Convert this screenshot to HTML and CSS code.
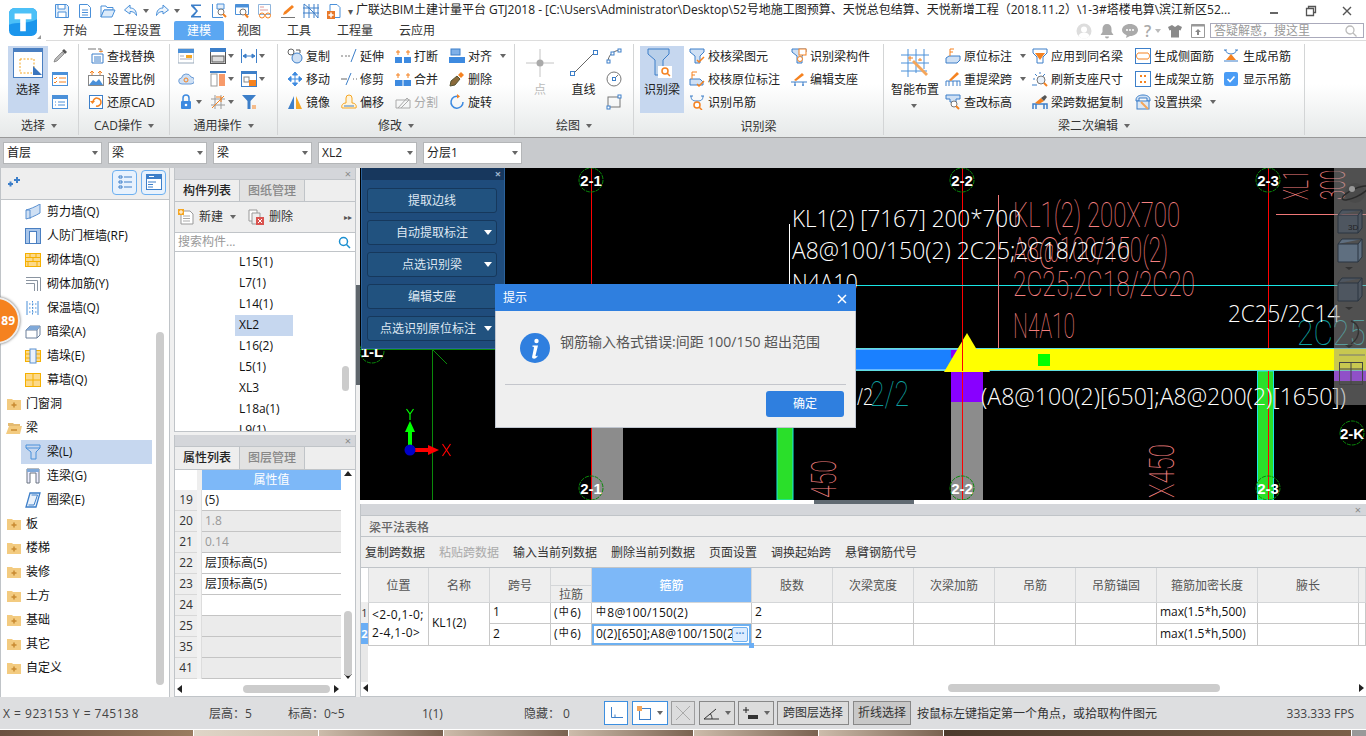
FILE: index.html
```html
<!DOCTYPE html>
<html lang="zh">
<head>
<meta charset="utf-8">
<title>广联达BIM土建计量平台 GTJ2018</title>
<link rel="stylesheet" href="styles.css">
</head>
<body>
<div class="app">

<header class="top">
  <div class="logo">
    <svg width="28" height="28" viewBox="0 0 30 30"><rect width="30" height="30" rx="6" fill="#1b96ec"/><path d="M0 6a6 6 0 0 1 6-6h18a6 6 0 0 1 6 6v6C18 18 8 14 0 18z" fill="#4cc0f7"/><path d="M6 6h18v6h-6v13h-6V12H6z" fill="#fff"/></svg>
    <i class="lgmark"></i>
  </div>
  <div class="top-right">
    <div class="titlerow">
      <div class="qa">
        <span class="qs"><svg class="i" viewBox="0 0 16 16"><path d="M1.500 1.500h11l2 2v11h-13z" fill="#e4effb" stroke="#4a90d9"/><path d="M4 2v4h7V2M4 14V9h8v5" fill="#fff" stroke="#4a90d9"/></svg></span>
        <span class="qs"><svg class="i" viewBox="0 0 16 16"><path d="M2.500 1.500h8l3 3v10h-11z" fill="#fff" stroke="#4a90d9"/><path d="M5 7h6M5 9.500h6M5 12h6" stroke="#4a90d9"/></svg></span>
        <span class="qs"><svg class="i" viewBox="0 0 16 16"><path d="M1 3h5l1 1.500h6V7H4L1 14z" fill="#fff" stroke="#4a90d9"/><path d="M4 7h11l-3 7H1z" fill="#dcebfa" stroke="#4a90d9"/></svg></span>
        <span class="qs"><svg class="i" viewBox="0 0 16 16"><path d="M7 2 1.500 7 7 11V8.500c3 0 5 1 6.500 4 0-5-2.500-7.500-6.500-7.500z" fill="#eef5fc" stroke="#4a90d9"/></svg></span>
        <span class="qc"><i class="c"></i></span>
        <span class="qs"><svg class="i" viewBox="0 0 16 16"><path d="M9 2l5.500 5L9 11V8.500c-3 0-5 1-6.500 4 0-5 2.500-7.500 6.500-7.500z" fill="#eef5fc" stroke="#4a90d9"/></svg></span>
        <span class="qc"><i class="c"></i></span>
        <span class="qs ql"><svg class="i" viewBox="0 0 16 16"><path d="M13 3V1.500H3V3l5 5-5 5v1.500h10V13H6l4-5-4-5z" fill="#3d7fc9"/></svg></span>
        <span class="qs"><svg class="i" viewBox="0 0 16 16"><path d="M1.500 1v13.500H12" fill="none" stroke="#4a90d9"/><path d="M6 1h7v5H6z" fill="#e4effb" stroke="#4a90d9"/><circle cx="10" cy="9" r="3" fill="#fff" stroke="#777"/><path d="M12 11l3 3" stroke="#f58220" stroke-width="2"/></svg></span>
        <span class="qs"><svg class="i" viewBox="0 0 16 16"><path d="M1.500 1.500h13v10h-13z" fill="#fff" stroke="#4a90d9"/><path d="M1.500 1.500h13v3h-13z" fill="#4a90d9"/><circle cx="9" cy="9" r="3" fill="#fff" stroke="#777"/><path d="M11 11l3 3.500" stroke="#f58220" stroke-width="2"/></svg></span>
        <span class="qs"><svg class="i" viewBox="0 0 16 16"><path d="M1.500 1.500h12v10h-12z" fill="#fff" stroke="#8fb5dc"/><path d="M3 4h4M3 7h8" stroke="#d99"/><circle cx="5" cy="12.500" r="2.500" fill="none" stroke="#f58220"/><circle cx="11" cy="12.500" r="2.500" fill="none" stroke="#f58220"/></svg></span>
        <span class="qs"><svg class="i" viewBox="0 0 16 16"><path d="M1 14.500h14" stroke="#777"/><path d="M3 12l1-3 8-7 2 2-8 7z" fill="#f58220"/></svg></span>
        <span class="qs"><svg class="i" viewBox="0 0 16 16"><path d="M1 1v14M6 1v14M11 1v14M15 1v14M0 5h16M0 10h16M1 1l5 4M6 5l5 5M11 10l4 5" fill="none" stroke="#3d7fc9"/></svg></span>
        <span class="qs"><svg class="i" viewBox="0 0 16 16"><path d="M4 1.500h7l3 3v10H4z" fill="#fff" stroke="#4a90d9"/><rect x="1" y="8" width="8" height="8" fill="#e8792a"/><path d="M5 9.500v5M2.500 12h5" stroke="#fff" stroke-width="1.500"/></svg></span>
        <span class="qm">▾</span>
      </div>
      <div class="apptitle">广联达BIM土建计量平台 GTJ2018 - [C:\Users\Administrator\Desktop\52号地施工图预算、天悦总包结算、天悦新增工程（2018.11.2）\1-3#塔楼电算\滨江新区52...</div>
      <div class="winctl">
        <svg width="12" height="12" viewBox="0 0 12 12"><path d="M1 8h8" stroke="#666" stroke-width="2"/></svg>
        <svg width="12" height="12" viewBox="0 0 12 12"><path d="M3.500 3.500V1.500h7v6h-2M1.500 3.500h7v7h-7z" fill="none" stroke="#555" stroke-width="1.300"/></svg>
        <svg width="12" height="12" viewBox="0 0 12 12"><path d="M2 2l8 8M10 2l-8 8" stroke="#555" stroke-width="1.400"/></svg>
      </div>
    </div>
    <div class="tabrow">
      <nav class="tabs">
        <span class="tab">开始</span><span class="tab">工程设置</span><span class="tab on">建模</span><span class="tab">视图</span><span class="tab">工具</span><span class="tab">工程量</span><span class="tab">云应用</span>
      </nav>
      <div class="user">
        <svg width="16" height="16" viewBox="0 0 16 16"><circle cx="8" cy="8" r="7.500" fill="#ddd"/><circle cx="8" cy="6.500" r="3" fill="#fff"/><path d="M2.500 13c1-3 3-3.500 5.500-3.500s4.500.5 5.500 3.500a7 7 0 0 1-11 0z" fill="#fff"/></svg>
        <svg class="bell" width="14" height="16" viewBox="0 0 14 16"><path d="M7 1c3 0 4.500 2 4.500 5v3l2 3H.5l2-3V6C2.500 3 4 1 7 1zM5 13.500h4a2 2 0 0 1-4 0z" fill="#aaa"/></svg>
        <svg class="ch" width="16" height="14" viewBox="0 0 16 14"><path d="M8 0c4.400 0 8 2.600 8 6s-3.600 6-8 6l-4 2 .7-2.800C2 10.200 0 8.300 0 6c0-3.400 3.600-6 8-6z" fill="#aaa"/><circle cx="5" cy="6" r="1" fill="#fff"/><circle cx="8" cy="6" r="1" fill="#fff"/><circle cx="11" cy="6" r="1" fill="#fff"/></svg>
        <span class="help">?</span><i class="c lg"></i>
        <svg class="sh" width="14" height="14" viewBox="0 0 14 14"><path d="M4 1 0 3l1.500 3.500L3 6v7.500h8V6l1.500.5L14 3l-4-2-3 2z" fill="#8a8a8a"/></svg>
        <svg class="up" width="14" height="14" viewBox="0 0 14 14"><path d="M.5.500h13v13H.5z" fill="#fff" stroke="#999"/><path d="M.5.500h13v2H.5z" fill="#999"/><path d="M7 5l3 3H8v3H6V8H4z" fill="#888"/></svg>
        <div class="qsearch"><span>答疑解惑，搜这里</span><svg width="12" height="12" viewBox="0 0 12 12"><circle cx="5" cy="5" r="4" fill="none" stroke="#bbb" stroke-width="1.300"/><path d="M8 8l3.500 3.500" stroke="#bbb" stroke-width="1.300"/></svg></div>
      </div>
    </div>
  </div>
</header>

<section class="ribbon">

  <div class="grp g1">
    <div class="gb">
      <div class="big on w40">
        <svg width="30" height="30" viewBox="0 0 30 30"><rect x=".5" y=".5" width="29" height="29" fill="#fff" stroke="#4a7fc1"/><rect width="30" height="4" fill="#4a7fc1"/><path d="M7 11h14v14" fill="none" stroke="#f5a623" stroke-dasharray="2 1.500"/><path d="M7 11v14h12" fill="none" stroke="#f5a623" stroke-dasharray="2 1.500"/><path d="M20 18l9 9h-9z" fill="#3c76bd"/></svg>
        <span>选择</span>
      </div>
      <div class="col ml4">
        <div class="ico"><svg class="i" viewBox="0 0 16 16"><path d="M2 14l1-3 7-7 2 2-7 7z" fill="#bbb" stroke="#666" stroke-width=".6"/><path d="M10 3l2-2 3 3-2 2z" fill="#555"/></svg></div>
        <div class="ico"><svg class="i" viewBox="0 0 16 16"><rect x=".5" y="1.500" width="15" height="13" fill="#fff" stroke="#4a90d9"/><rect y="1" width="16" height="3" fill="#4a90d9"/><path d="M2 7l1 1 2-2M7 7h7M2 11l1 1 2-2M7 11h7" fill="none" stroke="#f58220"/></svg></div>
        <div class="ico"><svg class="i" viewBox="0 0 16 16"><rect x=".5" y="1.500" width="15" height="13" fill="#fff" stroke="#4a90d9"/><rect y="1" width="16" height="4" fill="#4a90d9"/><path d="M3 8h1M6 8h7M3 11h1M6 11h7" stroke="#4a90d9"/></svg></div>
      </div>
    </div>
    <div class="gl">选择 <i class="c"></i></div>
  </div>

  <div class="grp g2">
    <div class="gb">
      <div class="col">
        <div class="tool"><svg class="i" viewBox="0 0 16 16"><path d="M0 1h8M10 1h3v3" fill="none" stroke="#777"/><path d="M13 4l-2-1M13 4l2-1" stroke="#f58220"/><path d="M4 6h11v9H4zM6 9h7M6 11h7M6 13h7" fill="#fff" stroke="#3d7fc9"/></svg><span>查找替换</span></div>
        <div class="tool"><svg class="i" viewBox="0 0 16 16"><rect x=".5" y="4.500" width="15" height="10" fill="#fff" stroke="#888"/><path d="M1 14l4-5 3 2 3-3 4 6z" fill="#4a90d9"/><path d="M4 4V0M12 4V0M2 2l2-2 2 2M10 2l2-2 2 2" fill="none" stroke="#f58220"/></svg><span>设置比例</span></div>
        <div class="tool"><svg class="i" viewBox="0 0 16 16"><rect x="1.500" y="1.500" width="13" height="13" fill="#fff" stroke="#3d7fc9"/><path d="M5 8a4 4 0 1 1 3 4" fill="none" stroke="#f58220" stroke-width="1.500"/><path d="M2 7h5l-2.500 3z" fill="#f58220"/></svg><span>还原CAD</span></div>
      </div>
    </div>
    <div class="gl">CAD操作 <i class="c"></i></div>
  </div>

  <div class="grp g3">
    <div class="gb g3grid">
      <div class="ig"><svg class="i" viewBox="0 0 16 16"><rect y="1" width="16" height="14" fill="#fff" stroke="#9ab"/><rect y="1" width="16" height="4" fill="#4a90d9"/><rect x="8" y="7" width="6" height="3" fill="#f5a623"/><path d="M2 8h4M2 11h12" stroke="#aab"/></svg></div>
      <div class="ig"><svg class="i" viewBox="0 0 16 16"><rect x=".5" y=".5" width="15" height="15" fill="#fff" stroke="#555"/><rect width="16" height="4" fill="#3d7fc9"/><rect x="2" y="8" width="12" height="6" fill="#ddd" stroke="#555"/></svg><i class="c"></i></div>
      <div class="ig"><svg class="i" viewBox="0 0 16 16"><path d="M.5 1v14M15.500 1v14M2 8h12M2 8l3-2v4zM14 8l-3-2v4z" fill="#3d7fc9" stroke="#3d7fc9"/></svg><i class="c"></i></div>
      <div class="ig"><svg class="i" viewBox="0 0 16 16"><path d="M4 13a3 3 0 0 1-.5-6A5 5 0 0 1 13 6a3.500 3.500 0 0 1 0 7z" fill="#cfe0f4" stroke="#6a9bd6"/><circle cx="8" cy="9" r="2" fill="none" stroke="#f58220"/></svg></div>
      <div class="ig"><svg class="i" viewBox="0 0 16 16"><rect y="0" width="16" height="2" fill="#3d7fc9"/><rect x="1" y="3" width="6" height="12" fill="#fff" stroke="#999"/><rect x="9" y="3" width="6" height="12" fill="#f79a6a"/></svg><i class="c"></i></div>
      <div class="ig"><svg class="i" viewBox="0 0 16 16"><rect x=".5" y=".5" width="15" height="15" fill="#fff" stroke="#3d7fc9"/><rect width="16" height="3" fill="#3d7fc9"/><rect x="3" y="6" width="5" height="5" fill="#fff" stroke="#888"/><rect x="8" y="9" width="7" height="6" fill="#f58220"/></svg><i class="c"></i></div>
      <div class="ig"><svg class="i" viewBox="0 0 16 16"><rect x="3" y="7" width="10" height="8" rx="1" fill="#3d8ae0"/><path d="M5 7V4a3 3 0 0 1 6 0v3" fill="none" stroke="#3d8ae0" stroke-width="1.500"/><circle cx="8" cy="11" r="1.300" fill="#fff"/></svg><i class="c"></i></div>
      <div class="ig"><svg class="i" viewBox="0 0 16 16"><path d="M1 5h14M1 11h14M5 1v14M11 1v14" stroke="#999"/><path d="M2 14 14 2M6 3h5v5" fill="none" stroke="#f58220"/></svg><i class="c"></i></div>
      <div class="ig"><svg class="i" viewBox="0 0 16 16"><path d="M1 1h14L9.500 7v8H6.500V7z" fill="#3d7fc9"/><path d="M11 12h4M11 14h4" stroke="#f58220"/></svg></div>
    </div>
    <div class="gl">通用操作 <i class="c"></i></div>
  </div>

  <div class="grp g4">
    <div class="gb g4grid">
      <div class="tool"><svg class="i" viewBox="0 0 16 16"><circle cx="4" cy="4" r="3" fill="#fff" stroke="#666"/><circle cx="10" cy="10" r="5" fill="#cfe0f4" stroke="#3d7fc9"/><path d="M9 2h4v3" fill="none" stroke="#555"/></svg><span>复制</span></div>
      <div class="tool"><svg class="i" viewBox="0 0 16 16"><path d="M0 8h2M4 8h2M7 8h2" stroke="#777"/><path d="M10 14 15 1" stroke="#3d7fc9"/></svg><span>延伸</span></div>
      <div class="tool"><svg class="i" viewBox="0 0 16 16"><rect y="9" width="7" height="6" fill="#3d8ae0"/><rect x="9" y="9" width="7" height="6" fill="#3d8ae0"/><path d="M3 2v5M1 4h4M13 2v5M11 4h4" stroke="#f58220"/></svg><span>打断</span></div>
      <div class="tool"><svg class="i" viewBox="0 0 16 16"><rect x="2" y="1" width="9" height="6" fill="#7fb0e8" stroke="#3d7fc9"/><rect x="0" y="9" width="16" height="6" fill="#3d8ae0"/></svg><span>对齐</span><i class="c cg"></i></div>
      <div class="tool"><svg class="i" viewBox="0 0 16 16"><path d="M8 1l2.500 3h-5zM8 15l2.500-3h-5zM1 8l3-2.500v5zM15 8l-3-2.500v5zM4 8h8M8 4v8" fill="#3d8ae0" stroke="#3d8ae0"/></svg><span>移动</span></div>
      <div class="tool"><svg class="i" viewBox="0 0 16 16"><path d="M0 8h6M12 8h1M15 8h1" stroke="#666"/><path d="M5 14 10 2" stroke="#3d7fc9"/></svg><span>修剪</span></div>
      <div class="tool"><svg class="i" viewBox="0 0 16 16"><rect y="9" width="16" height="6" fill="#3d8ae0"/><path d="M8 9v6" stroke="#fff"/><path d="M3 2v5M1 4h4M13 2v5M11 4h4" stroke="#f58220"/></svg><span>合并</span></div>
      <div class="tool"><svg class="i" viewBox="0 0 16 16"><path d="M1 15l1-5 6-5 3 3-5 6z" fill="#8a6a3a" stroke="#553"/><path d="M9 4l3-3 3 3-3 3z" fill="#f58220"/></svg><span>删除</span></div>
      <div class="tool"><svg class="i" viewBox="0 0 16 16"><path d="M7 2 1 15h6z" fill="#3d7fc9"/><path d="M9 2v13h6z" fill="#f5a623"/></svg><span>镜像</span></div>
      <div class="tool"><svg class="i" viewBox="0 0 16 16"><path d="M1 14c-1-3 1-5 4-5V4a3 3 0 0 1 6 0v5c3 0 5 2 4 5z" fill="#fff4dc" stroke="#f5a623"/><path d="M3 12h10" stroke="#3d7fc9"/></svg><span>偏移</span></div>
      <div class="tool dis"><svg class="i" viewBox="0 0 16 16"><path d="M1 6h14v8H1zM3 14l9-10 2 2-8 8" fill="none" stroke="#aaa"/></svg><span>分割</span></div>
      <div class="tool"><svg class="i" viewBox="0 0 16 16"><path d="M10 2.500A6 6 0 1 0 14 8" fill="none" stroke="#3d8ae0" stroke-width="1.500"/><path d="M8 0l3 2.500-3 2z" fill="#f58220"/></svg><span>旋转</span></div>
    </div>
    <div class="gl">修改 <i class="c"></i></div>
  </div>

  <div class="grp g5">
    <div class="gb">
      <div class="big w26 dim">
        <svg width="30" height="30" viewBox="0 0 30 30"><path d="M15 1v28M1 15h28" stroke="#c4c4c4"/><circle cx="15" cy="15" r="3.500" fill="#aaa"/></svg>
        <span>点</span>
      </div>
      <div class="big w33 ml14">
        <svg width="30" height="30" viewBox="0 0 30 30"><path d="M4 26 26 4" stroke="#666"/><rect x="1.500" y="23.500" width="4" height="4" fill="#fff" stroke="#3d7fc9"/><rect x="24.500" y="2.500" width="4" height="4" fill="#fff" stroke="#3d7fc9"/></svg>
        <span>直线</span>
      </div>
      <div class="col ml6">
        <div class="ico"><svg class="i" viewBox="0 0 16 16"><path d="M2 14C2 8 6 3 14 2" fill="none" stroke="#666"/><rect x="1" y="12" width="3" height="3" fill="#fff" stroke="#3d7fc9"/><rect x="12" y="1" width="3" height="3" fill="#fff" stroke="#3d7fc9"/><rect x="5" y="4" width="3" height="3" fill="#fff" stroke="#3d7fc9"/></svg></div>
        <div class="ico"><svg class="i" viewBox="0 0 16 16"><circle cx="8" cy="8" r="7" fill="none" stroke="#777"/><path d="M8 8l4-4" stroke="#777"/><rect x="6.500" y="6.500" width="3" height="3" fill="#fff" stroke="#3d7fc9"/></svg></div>
        <div class="ico"><svg class="i" viewBox="0 0 16 16"><rect x="2" y="3" width="12" height="10" fill="none" stroke="#777"/><rect x="1" y="12" width="3" height="3" fill="#fff" stroke="#3d7fc9"/><rect x="12" y="1" width="3" height="3" fill="#fff" stroke="#3d7fc9"/></svg></div>
      </div>
    </div>
    <div class="gl">绘图 <i class="c"></i></div>
  </div>

  <div class="grp g6">
    <div class="gb">
      <div class="big on w44">
        <svg width="32" height="30" viewBox="0 0 32 30"><path d="M2 1h21v5l-6 6v15H9V12L2 6z" fill="#b8cfe9" stroke="#3d7fc9"/><rect x="12" y="18" width="14" height="12" fill="#fff"/><circle cx="19" cy="23" r="3" fill="none" stroke="#f58220" stroke-width="1.500"/><path d="M21 25l3 3" stroke="#f58220" stroke-width="1.500"/></svg>
        <span>识别梁</span>
      </div>
      <div class="col ml5 w102">
        <div class="tool"><svg class="i" viewBox="0 0 16 16"><path d="M1 1h14v3l-4 4v7H6V8L1 4z" fill="#cfe0f4" stroke="#3d7fc9"/><path d="M8 12l2 2 5-5" fill="none" stroke="#f58220" stroke-width="1.500"/></svg><span>校核梁图元</span></div>
        <div class="tool"><svg class="i" viewBox="0 0 16 16"><path d="M1 14V8h10l3 3v3z" fill="#cfe0f4" stroke="#3d7fc9"/><path d="M3 8V1M3 1h5M3 4h3" stroke="#f58220"/><path d="M8 13l2 2 5-5" fill="none" stroke="#f58220" stroke-width="1.500"/></svg><span>校核原位标注</span></div>
        <div class="tool"><svg class="i" viewBox="0 0 16 16"><path d="M1 2h3M12 2h3M2 2c0 4 2 5 6 5s6-1 6-5" fill="none" stroke="#3d7fc9"/><circle cx="8" cy="11" r="3" fill="#fff" stroke="#f58220" stroke-width="1.500"/><path d="M10 13l3 3" stroke="#f58220" stroke-width="1.500"/></svg><span>识别吊筋</span></div>
      </div>
      <div class="col">
        <div class="tool"><svg class="i" viewBox="0 0 16 16"><path d="M1 1h14v3l-4 4v7H6V8L1 4z" fill="#cfe0f4" stroke="#3d7fc9"/><rect x="8" y="1" width="7" height="6" fill="#fff" stroke="#f58220"/><circle cx="9" cy="11" r="2.500" fill="#fff" stroke="#f58220"/></svg><span>识别梁构件</span></div>
        <div class="tool"><svg class="i" viewBox="0 0 16 16"><path d="M3 9l8-7 2 2-8 6z" fill="#f58220"/><path d="M0 11h16M3 14h2M11 14h2M4 11v4M12 11v4" stroke="#3d7fc9"/></svg><span>编辑支座</span></div>
      </div>
    </div>
    <div class="gl gl-low">识别梁</div>
  </div>

  <div class="grp g7">
    <div class="gb">
      <div class="big w50">
        <svg width="30" height="30" viewBox="0 0 30 30"><path d="M1 7h28M1 15h28M1 23h26M8 1v28M16 1v24M24 1v20" stroke="#4a90d9"/><path d="M14 12l14 14-2 2-14-14z" fill="#f5a65a"/><path d="M10 8v5M8 10h5M20 10v3M18 12h4" stroke="#f58220"/></svg>
        <span>智能布置</span>
        <i class="c bc"></i>
      </div>
      <div class="col ml5 w87">
        <div class="tool"><svg class="i" viewBox="0 0 16 16"><path d="M1 15V10l3-2h11v4l-3 3z" fill="#cfe0f4" stroke="#3d7fc9"/><path d="M5 8V1M5 1h4M5 4h3" stroke="#f58220"/></svg><span>原位标注</span><i class="c cg"></i></div>
        <div class="tool"><svg class="i" viewBox="0 0 16 16"><path d="M1 15V10h14v5M4 10v5M8 10v5M12 10v5" fill="none" stroke="#3d7fc9"/><path d="M4 9l8-8 2 2-8 7z" fill="#f58220"/></svg><span>重提梁跨</span><i class="c cg"></i></div>
        <div class="tool"><svg class="i" viewBox="0 0 16 16"><path d="M1 1h14v4H11v3H5V5H1z" fill="#cfe0f4" stroke="#3d7fc9"/><circle cx="9" cy="10" r="3" fill="#fff" stroke="#777"/><path d="M11 12l3 3" stroke="#f58220" stroke-width="2"/></svg><span>查改标高</span></div>
      </div>
      <div class="col w103">
        <div class="tool"><svg class="i" viewBox="0 0 16 16"><path d="M1 1h14v4l-4 4v6H5V9L1 5z" fill="#fff" stroke="#3d7fc9"/><path d="M3 5h10L8 12z" fill="#f58220"/></svg><span>应用到同名梁</span></div>
        <div class="tool"><svg class="i" viewBox="0 0 16 16"><circle cx="9" cy="9" r="4" fill="#e8f1fb" stroke="#777"/><path d="M12 12l3 3" stroke="#f58220" stroke-width="2"/><path d="M8 1v2M1 8h2M3 3l2 2M13 3l-2 2M0 14h5" stroke="#3d7fc9"/></svg><span>刷新支座尺寸</span></div>
        <div class="tool"><svg class="i" viewBox="0 0 16 16"><path d="M1 15V10h14v5M4 10v5M12 10v5" fill="none" stroke="#3d7fc9" stroke-width="1.500"/><path d="M3 9l6-5 3 3-5 3z" fill="#f58220"/><path d="M9 4l4-3 2 2-3 4z" fill="#555"/></svg><span>梁跨数据复制</span></div>
      </div>
      <div class="col w88">
        <div class="tool"><svg class="i" viewBox="0 0 16 16"><rect x=".5" y=".5" width="15" height="15" fill="#fff" stroke="#3d7fc9"/><path d="M3 5h10M3 11h10M3 5c-2 2-2 4 0 6M13 5c2 2 2 4 0 6" fill="none" stroke="#f58220"/></svg><span>生成侧面筋</span></div>
        <div class="tool"><svg class="i" viewBox="0 0 16 16"><rect x=".5" y=".5" width="15" height="15" fill="#fff" stroke="#3d7fc9"/><path d="M5 4h2v2H5zM9 4h2v2H9zM5 10h2v2H5zM9 10h2v2H9z" fill="#f58220"/></svg><span>生成架立筋</span></div>
        <div class="tool"><svg class="i" viewBox="0 0 16 16"><path d="M1 6C1 2 5 1 8 1s7 1 7 5v1h-3V4H4v3H1z" fill="#cfe0f4" stroke="#3d7fc9"/><rect x="2" y="7" width="12" height="8" fill="#dde8f4" stroke="#3d7fc9"/><path d="M6 8l7 7" stroke="#f5a65a" stroke-width="2"/></svg><span>设置拱梁</span><i class="c cg"></i></div>
      </div>
      <div class="col">
        <div class="tool t20"><svg class="i" viewBox="0 0 16 16"><path d="M1 2h3M12 2h3M2 2c1 2 3 4 6 4s5-2 6-4" fill="none" stroke="#3d7fc9"/><path d="M8 6l5 6H3z" fill="#f58220"/><path d="M1 13h14" stroke="#3d7fc9"/></svg><span>生成吊筋</span></div>
        <div class="tool t20"><svg class="i chk" viewBox="0 0 14 14"><rect width="14" height="14" rx="2" fill="#4a9cf5"/><path d="M3.500 7l2.500 2.500 4.500-5" fill="none" stroke="#fff" stroke-width="1.700"/></svg><span>显示吊筋</span></div>
      </div>
    </div>
    <div class="gl">梁二次编辑 <i class="c"></i></div>
  </div>
</section>

<section class="strip">
  <div class="dd"><span>首层</span><i class="c"></i></div>
  <div class="dd"><span>梁</span><i class="c"></i></div>
  <div class="dd"><span>梁</span><i class="c"></i></div>
  <div class="dd"><span>XL2</span><i class="c"></i></div>
  <div class="dd"><span>分层1</span><i class="c"></i></div>
</section>

<main class="main">

  <aside class="nav">
    <div class="navbar">
      <svg class="star" width="14" height="12" viewBox="0 0 14 12"><path d="M0 8h5M2.500 5.500v5M6 4h6M9 1v6" stroke="#3d7fc9" stroke-width="2"/></svg>
      <span class="nb"><svg width="16" height="16" viewBox="0 0 16 16"><path d="M2 2h3v2H2zM2 7h3v2H2zM2 12h3v2H2z" fill="none" stroke="#3d7fc9"/><path d="M7 3h8M7 8h8M7 13h8" stroke="#3d7fc9"/></svg></span>
      <span class="nb"><svg width="16" height="16" viewBox="0 0 16 16"><rect x=".5" y=".5" width="15" height="15" fill="#fff" stroke="#3d7fc9"/><rect width="16" height="5" fill="#3d7fc9"/><path d="M3 2.500h5" stroke="#fff"/><path d="M2 8h8M2 10.500h5M2 13h5" stroke="#3d7fc9"/></svg></span>
    </div>
    <div class="tree">
      <div class="tr sub"><svg class="i" viewBox="0 0 16 16"><path d="M1 6c4-1 9-3 14-6v9c-5 3-10 5-14 6z" fill="#cfe0f4" stroke="#5a90d0"/><path d="M1 6h4l0 9" fill="none" stroke="#5a90d0"/></svg><span>剪力墙(Q)</span></div>
      <div class="tr sub"><svg class="i" viewBox="0 0 16 16"><rect x=".5" y=".5" width="15" height="15" fill="#a9c6ea" stroke="#4a7fc1"/><rect x="4.500" y="3.500" width="7" height="12" fill="#fff" stroke="#4a7fc1"/></svg><span>人防门框墙(RF)</span></div>
      <div class="tr sub"><svg class="i" viewBox="0 0 16 16"><rect x=".5" y="1.500" width="15" height="13" fill="#fcd98a" stroke="#f5b000"/><path d="M1 5.500h14M1 9.500h14M5 2v3.500M11 2v3.500M8 5.500v4M3 9.500v5M12 9.500v5" stroke="#f5b000"/></svg><span>砌体墙(Q)</span></div>
      <div class="tr sub"><svg class="i" viewBox="0 0 16 16"><path d="M1 1.500h14.500V15M1 4.500h11.500V15M1 7.500h8.500V15" fill="none" stroke="#8a94a0"/></svg><span>砌体加筋(Y)</span></div>
      <div class="tr sub"><svg class="i" viewBox="0 0 16 16"><path d="M2 1v14M13 1v14" stroke="#4a90d9"/><path d="M7.500 1v14M4 4h8M4 8h8M4 12h8" stroke="#4a90d9" stroke-dasharray="1.500 1.500"/></svg><span>保温墙(Q)</span></div>
      <div class="tr sub"><svg class="i" viewBox="0 0 16 16"><path d="M1 6 5 2h10v9l-3 3H1zM1 6h11v8M12 6l3-4" fill="#fff" stroke="#6a7f9a"/><path d="M5 2h10l-3 4H1z" fill="#7fa8d8"/></svg><span>暗梁(A)</span></div>
      <div class="tr sub"><svg class="i" viewBox="0 0 16 16"><rect x=".5" y="2.500" width="15" height="11" fill="#fcd98a" stroke="#f5b000"/><path d="M1 6h14M1 10h14" stroke="#f5b000"/><rect x="5" y="1" width="6" height="14" fill="#eaf2fb" stroke="#5a90d0"/></svg><span>墙垛(E)</span></div>
      <div class="tr sub"><svg class="i" viewBox="0 0 16 16"><rect x=".5" y="1.500" width="15" height="13" fill="#fcd98a" stroke="#f5b000"/><path d="M1 8h14M8 2v12" stroke="#f5b000"/></svg><span>幕墙(Q)</span></div>
      <div class="tr fold"><svg class="i" viewBox="0 0 16 16"><path d="M1 3h5l1 1h8v10H1z" fill="#f3cb80"/><path d="M8 6.500v5M5.500 9h5" stroke="#c88a30" stroke-width="1.500"/></svg><span>门窗洞</span></div>
      <div class="tr fold"><svg class="i" viewBox="0 0 16 16"><path d="M2 3h5l1 1h6v2H2z" fill="#e4bb72"/><path d="M3 6h13l-2 8H0z" fill="#f3cb80"/><path d="M5 10h6" stroke="#c88a30" stroke-width="1.500"/></svg><span>梁</span></div>
      <div class="tr sub sel"><svg class="i" viewBox="0 0 16 16"><path d="M1 1h14v3l-4 4v7H6V8L1 4z" fill="#c6d7ef" stroke="#4a90d9"/><path d="M1 4h14" stroke="#4a90d9"/></svg><span>梁(L)</span></div>
      <div class="tr sub"><svg class="i" viewBox="0 0 16 16"><path d="M2 15V1h12v14h-3V5H5v10z" fill="#eef" stroke="#6a7480"/><path d="M2 1h12v3H2z" fill="#7fa8d8"/></svg><span>连梁(G)</span></div>
      <div class="tr sub"><svg class="i" viewBox="0 0 16 16"><path d="M5 1h10l-4 14H1z" fill="#eaf2fb" stroke="#3d7fc9" stroke-width="1.300"/><path d="M6.500 3h6L9 13H3.500" fill="none" stroke="#3d7fc9"/></svg><span>圈梁(E)</span></div>
      <div class="tr fold"><svg class="i" viewBox="0 0 16 16"><path d="M1 3h5l1 1h8v10H1z" fill="#f3cb80"/><path d="M8 6.500v5M5.500 9h5" stroke="#c88a30" stroke-width="1.500"/></svg><span>板</span></div>
      <div class="tr fold"><svg class="i" viewBox="0 0 16 16"><path d="M1 3h5l1 1h8v10H1z" fill="#f3cb80"/><path d="M8 6.500v5M5.500 9h5" stroke="#c88a30" stroke-width="1.500"/></svg><span>楼梯</span></div>
      <div class="tr fold"><svg class="i" viewBox="0 0 16 16"><path d="M1 3h5l1 1h8v10H1z" fill="#f3cb80"/><path d="M8 6.500v5M5.500 9h5" stroke="#c88a30" stroke-width="1.500"/></svg><span>装修</span></div>
      <div class="tr fold"><svg class="i" viewBox="0 0 16 16"><path d="M1 3h5l1 1h8v10H1z" fill="#f3cb80"/><path d="M8 6.500v5M5.500 9h5" stroke="#c88a30" stroke-width="1.500"/></svg><span>土方</span></div>
      <div class="tr fold"><svg class="i" viewBox="0 0 16 16"><path d="M1 3h5l1 1h8v10H1z" fill="#f3cb80"/><path d="M8 6.500v5M5.500 9h5" stroke="#c88a30" stroke-width="1.500"/></svg><span>基础</span></div>
      <div class="tr fold"><svg class="i" viewBox="0 0 16 16"><path d="M1 3h5l1 1h8v10H1z" fill="#f3cb80"/><path d="M8 6.500v5M5.500 9h5" stroke="#c88a30" stroke-width="1.500"/></svg><span>其它</span></div>
      <div class="tr fold"><svg class="i" viewBox="0 0 16 16"><path d="M1 3h5l1 1h8v10H1z" fill="#f3cb80"/><path d="M8 6.500v5M5.500 9h5" stroke="#c88a30" stroke-width="1.500"/></svg><span>自定义</span></div>
      <div class="vthumb navthumb"></div>
    </div>
    <div class="badge">89</div>
  </aside>

  <div class="midcol">
    <section class="pane p1">
      <div class="ph"><span>×</span></div>
      <div class="ptabs"><span class="ptab on">构件列表</span><span class="ptab">图纸管理</span></div>
      <div class="ptool">
        <svg class="i" viewBox="0 0 16 16"><path d="M3 2h9l3 3v10H3z" fill="#fff" stroke="#999"/><path d="M5 7h7M5 9.500h7M5 12h7" stroke="#aaa"/><rect width="6" height="6" fill="#f5a623"/><path d="M1 3h4M3 1v4" stroke="#fff"/></svg>
        <span class="pt">新建</span><i class="c"></i>
        <svg class="i del" viewBox="0 0 16 16"><path d="M1 1h8v11H1z" fill="#fff" stroke="#999"/><path d="M4 4h8v11H4z" fill="#eee" stroke="#999"/><rect x="8" y="8" width="8" height="8" fill="#d9534f"/><path d="M10 10l4 4M14 10l-4 4" stroke="#fff"/></svg>
        <span class="pt">删除</span>
        <span class="more">▸▸</span>
      </div>
      <div class="psearch"><span>搜索构件...</span><svg width="13" height="13" viewBox="0 0 13 13"><circle cx="5.500" cy="5.500" r="4" fill="none" stroke="#1a8fd0" stroke-width="1.500"/><path d="M8.500 8.500l3.500 3.500" stroke="#1a8fd0" stroke-width="1.500"/></svg></div>
      <div class="clist">
        <div class="ci"><span>L15(1)</span></div>
        <div class="ci"><span>L7(1)</span></div>
        <div class="ci"><span>L14(1)</span></div>
        <div class="ci sel"><span>XL2</span></div>
        <div class="ci"><span>L16(2)</span></div>
        <div class="ci"><span>L5(1)</span></div>
        <div class="ci"><span>XL3</span></div>
        <div class="ci"><span>L18a(1)</span></div>
        <div class="ci"><span>L9(1)</span></div>
        <div class="vthumb listthumb"></div>
      </div>
    </section>
    <section class="pane p2">
      <div class="ph"><span>×</span></div>
      <div class="ptabs"><span class="ptab on">属性列表</span><span class="ptab">图层管理</span></div>
      <div class="props">
        <div class="prow phead"><span class="pn"></span><span class="pg"></span><span class="pv">属性值</span></div>
        <div class="prow"><span class="pn">19</span><span class="pg"></span><span class="pv">(5)</span></div>
        <div class="prow alt"><span class="pn">20</span><span class="pg"></span><span class="pv">1.8</span></div>
        <div class="prow alt"><span class="pn">21</span><span class="pg"></span><span class="pv">0.14</span></div>
        <div class="prow"><span class="pn">22</span><span class="pg"></span><span class="pv">层顶标高(5)</span></div>
        <div class="prow"><span class="pn">23</span><span class="pg"></span><span class="pv">层顶标高(5)</span></div>
        <div class="prow"><span class="pn">24</span><span class="pg"></span><span class="pv"></span></div>
        <div class="prow alt"><span class="pn">25</span><span class="pg"></span><span class="pv"></span></div>
        <div class="prow alt"><span class="pn">35</span><span class="pg"></span><span class="pv"></span></div>
        <div class="prow alt"><span class="pn">41</span><span class="pg"></span><span class="pv"></span></div>
        <i class="aup"></i><i class="adn"></i>
        <div class="vthumb propthumb"></div>
        <i class="al"></i><i class="ar"></i>
        <div class="hthumb propsh"></div>
      </div>
    </section>
  </div>

  <div class="handle"><i></i></div>

  <div class="rightcol">
    <div class="canvas">
      <svg class="cad" width="1006" height="332" viewBox="360 168 1006 332">
        <rect x="591" y="420" width="32" height="80" fill="#8c8c8c"/>
        <rect x="777" y="420" width="16" height="80" fill="#2adf2a" stroke="#19e6e6"/>
        <rect x="951" y="372" width="32" height="30" fill="#8800ff"/>
        <rect x="951" y="402" width="32" height="98" fill="#8c8c8c"/>
        <rect x="1257.500" y="371" width="16" height="129" fill="#2adf2a" stroke="#19e6e6"/>
        <rect x="1334" y="371" width="32" height="10" fill="#8800ff"/>
        <path d="M591.500 168v332M962.500 168v332M1268.500 168v332" stroke="#f00"/>
        <path d="M360 349.500h140M432.500 349v151M432 349l15 15" stroke="#0a8a0a" fill="none"/>
        <path d="M789.500 224v66" stroke="#fff"/>
        <path d="M789 285.500h577" stroke="#19e6e6"/>
        <path d="M998.500 195v154M1276 214.500h90" stroke="#f07878"/>
        <rect x="840" y="349" width="526" height="22" fill="#ff0"/>
        <rect x="840" y="350" width="117" height="20" fill="#1a80ff"/>
        <rect x="951" y="350" width="6" height="8" fill="#8800ff"/>
        <path d="M840 348.500h526M840 370.500h526" stroke="#5fdde0"/>
        <path d="M840 349.500h127M840 369.500h127" stroke="#6ab8ff"/>
        <path d="M967 333 990 372H944z" fill="#ff0"/>
        <path d="M591.500 349v0M962.500 333v38" stroke="#f00"/>
        <rect x="1038" y="354" width="12" height="12" fill="#0f0"/>
        <g class="stick pink">
          <text x="1013" y="227" textLength="167" lengthAdjust="spacingAndGlyphs">KL1(2) 200X700</text>
          <text x="1013" y="262" textLength="155" lengthAdjust="spacingAndGlyphs">A8@100/150(2)</text>
          <text x="1013" y="296" textLength="182" lengthAdjust="spacingAndGlyphs">2C25;2C18/2C20</text>
          <text x="1013" y="338" textLength="62" lengthAdjust="spacingAndGlyphs">N4A10</text>
          <text transform="translate(1308 200) rotate(-90)" textLength="30" lengthAdjust="spacingAndGlyphs">XL1</text>
          <text transform="translate(1345 200) rotate(-90)" textLength="30" lengthAdjust="spacingAndGlyphs">300</text>
          <text transform="translate(836 498) rotate(-90)" textLength="38" lengthAdjust="spacingAndGlyphs">450</text>
          <text transform="translate(1174 498) rotate(-90)" textLength="54" lengthAdjust="spacingAndGlyphs">X450</text>
        </g>
        <g class="stick teal">
          <text x="1297" y="345" textLength="80" lengthAdjust="spacingAndGlyphs">2C25/</text>
          <text x="870" y="406" textLength="39" lengthAdjust="spacingAndGlyphs">2/2</text>
        </g>
        <g class="note">
          <text x="792" y="227" textLength="229" lengthAdjust="spacingAndGlyphs">KL1(2) [7167] 200*700</text>
          <text x="792" y="259" textLength="338" lengthAdjust="spacingAndGlyphs">A8@100/150(2) 2C25;2C18/2C20</text>
          <text x="792" y="291" textLength="66" lengthAdjust="spacingAndGlyphs">N4A10</text>
          <text x="1228" y="322" textLength="112" lengthAdjust="spacingAndGlyphs">2C25/2C14</text>
          <text x="981" y="405" textLength="365" lengthAdjust="spacingAndGlyphs">(A8@100(2)[650];A8@200(2)[1650])</text>
          <text x="857" y="405" textLength="16" lengthAdjust="spacingAndGlyphs">/2</text>
        </g>
        <g class="axis">
          <circle cx="591" cy="180" r="12"/><text x="591" y="186">2-1</text>
          <circle cx="962" cy="180" r="12"/><text x="962" y="186">2-2</text>
          <circle cx="1268" cy="180" r="12"/><text x="1268" y="186">2-3</text>
          <circle cx="591" cy="488" r="12"/><text x="591" y="494">2-1</text>
          <circle cx="962" cy="488" r="12"/><text x="962" y="494">2-2</text>
          <circle cx="1268" cy="488" r="12"/><text x="1268" y="494">2-3</text>
          <circle cx="372" cy="351" r="12"/><text x="372" y="357">1-L</text>
          <circle cx="1352" cy="433" r="12"/><text x="1352" y="439">2-K</text>
        </g>
        <rect x="408" y="425" width="4" height="25" fill="#0f0"/>
        <path d="M405 432l5-11 5 11z" fill="#0f0"/>
        <rect x="410" y="448" width="18" height="4" fill="#f00"/>
        <path d="M428 445l11 5-11 5z" fill="#f00"/>
        <circle cx="410" cy="450" r="5.500" fill="#0000c8"/>
        <path d="M406.500 409l3.500 5 3.500-5M410 414v6" stroke="#0f0" fill="none" stroke-width="1.200"/>
        <path d="M442.500 444l8 12M450.500 444l-8 12" stroke="#f00" stroke-width="1.200"/>
      </svg>

      <div class="float">
        <div class="fh"><span>×</span></div>
        <div class="fb">提取边线</div>
        <div class="fb">自动提取标注<i class="wc"></i></div>
        <div class="fb">点选识别梁<i class="wc"></i></div>
        <div class="fb">编辑支座</div>
        <div class="fb fb8">点选识别原位标注<i class="wc"></i></div>
      </div>

      <div class="viewtools">
        <svg width="32" height="237" viewBox="0 0 32 237">
          <circle cx="21" cy="25" r="10" fill="#4a4a4a"/><ellipse cx="21" cy="25" rx="14" ry="4" fill="none" stroke="#2a2a2a" stroke-width="1.500" transform="rotate(-25 21 25)"/><circle cx="18" cy="21" r="3" fill="#999"/>
          <path d="M4 47h20l4-5v18l-4 5H4zM4 47l4-5h20M24 47v18" fill="#4e5660" stroke="#2a3540"/><text x="14" y="62" class="vt3">3D</text>
          <path d="M4 76h20l4-5v18l-4 5H4zM4 76l4-5h20M24 76v18" fill="#5f6f80" stroke="#2a3540"/>
          <path d="M11 99h8l-4 3z" fill="#333"/>
          <path d="M4 115h20l4-5v18l-4 5H4zM4 115l4-5h20M24 115v18" fill="#4e5660" stroke="#2a3540"/>
          <path d="M11 139h8l-4 3z" fill="#333"/>
          <path d="M17 153c9 3 11 15 0 23" fill="none" stroke="#333" stroke-width="1.500"/>
          <path d="M11 177h8l-4 3z" fill="#333"/>
          <path d="M5 187h26" stroke="#777"/>
          <rect x="5.500" y="194.500" width="23" height="22" fill="none" stroke="#444"/>
          <path d="M5 201h24M17 195v22" stroke="#444"/>
        </svg>
      </div>

      <div class="dialog">
        <div class="dh"><span>提示</span><svg width="10" height="10" viewBox="0 0 10 10"><path d="M1 1l8 8M9 1 1 9" stroke="#fff" stroke-width="1.500"/></svg></div>
        <div class="db">
          <svg width="30" height="30" viewBox="0 0 30 30"><circle cx="15" cy="15" r="15" fill="#2f7fdf"/><circle cx="16.500" cy="8" r="2.200" fill="#fff"/><path d="M12.500 12.500h5.500l-2.500 10c0 1 1 1 2.500 0-1 2.500-3 3.500-5 3-1.200-.5-1-2-.5-3.500l1.500-7.500c0-1-1-1-1.500-.5z" fill="#fff"/></svg>
          <span>钢筋输入格式错误:间距 100/150 超出范围</span>
        </div>
        <div class="df"><button class="ok" type="button">确定</button></div>
      </div>
    </div>

    <div class="hbar"><i></i></div>

    <section class="tablep">
      <div class="ph"><span>×</span></div>
      <div class="tt">梁平法表格</div>
      <div class="ttool">
        <span>复制跨数据</span><span class="dis">粘贴跨数据</span><span>输入当前列数据</span><span>删除当前列数据</span><span>页面设置</span><span>调换起始跨</span><span>悬臂钢筋代号</span>
      </div>
      <div class="tw">
        <div class="gut"><span></span><span class="r1">1</span><span class="r2">2</span></div>
        <table class="bt">
          <colgroup><col class="c60"><col class="c61"><col class="c61"><col class="c41"><col class="c160"><col class="c81"><col class="c81"><col class="c81"><col class="c81"><col class="c81"><col class="c101"><col class="c101"><col></colgroup>
          <thead>
            <tr><th rowspan="2">位置</th><th rowspan="2">名称</th><th rowspan="2">跨号</th><th class="blank"></th><th rowspan="2" class="act">箍筋</th><th rowspan="2">肢数</th><th rowspan="2">次梁宽度</th><th rowspan="2">次梁加筋</th><th rowspan="2">吊筋</th><th rowspan="2">吊筋锚固</th><th rowspan="2">箍筋加密长度</th><th rowspan="2">腋长</th><th rowspan="2"></th></tr>
            <tr><th class="low">拉筋</th></tr>
          </thead>
          <tbody>
            <tr><td rowspan="2" class="pos">&lt;2-0,1-0;<br>2-4,1-0&gt;</td><td rowspan="2" class="nm">KL1(2)</td><td>1</td><td class="ls">(<span class="rb">中</span>6)</td><td class="ls"><span class="rb">中</span>8@100/150(2)</td><td>2</td><td></td><td></td><td></td><td></td><td>max(1.5*h,500)</td><td></td><td></td></tr>
            <tr><td>2</td><td class="ls">(<span class="rb">中</span>6)</td><td class="edit"><div class="ed"><span>0(2)[650];A8@100/150(2</span><b>···</b></div><i class="handlept"></i></td><td>2</td><td></td><td></td><td></td><td></td><td>max(1.5*h,500)</td><td></td><td></td></tr>
          </tbody>
        </table>
        <i class="al tl"></i><i class="ar tr2"></i>
        <div class="hthumb tbth"></div>
      </div>
    </section>
  </div>
</main>

<footer class="status">
  <span class="s1">X = 923153 Y = 745138</span>
  <span class="s2">层高：5</span>
  <span class="s3">标高：0~5</span>
  <span class="s4">1(1)</span>
  <span class="s5">隐藏： 0</span>
  <span class="sb on w24"><svg width="14" height="14" viewBox="0 0 14 14"><path d="M2.500 1v10.500H14M6 8.500v3" fill="none" stroke="#3d7fc9"/></svg></span>
  <span class="sb on w36"><svg width="15" height="15" viewBox="0 0 15 15"><rect x="2.500" y="2.500" width="11" height="11" fill="none" stroke="#3d7fc9"/><rect x="0" y="0" width="5" height="5" fill="#f5a65a"/></svg><i class="c"></i></span>
  <span class="sb w24 off"><svg width="16" height="16" viewBox="0 0 16 16"><path d="M1 1l14 14M15 1 1 15" stroke="#999"/></svg></span>
  <span class="sb w36"><svg width="17" height="14" viewBox="0 0 17 14"><path d="M1 13h15M1 13 13 3" stroke="#333" fill="none"/><path d="M9 13c0-2-.5-3.500-1.500-5" stroke="#333" fill="none"/></svg><i class="c"></i></span>
  <span class="sb w36"><svg width="17" height="14" viewBox="0 0 17 14"><path d="M4 1v6M1 4h6" stroke="#222"/><rect x="6" y="9" width="10" height="4" fill="#333"/></svg><i class="c"></i></span>
  <span class="sb txt w72">跨图层选择</span>
  <span class="sb txt w58 act">折线选择</span>
  <span class="s6">按鼠标左键指定第一个角点，或拾取构件图元</span>
  <span class="s7">333.333 FPS</span>
</footer>

<div class="taskbar">
  <span class="t-a"></span><span class="t-b"></span><span class="t-c"></span><span class="t-c"></span><span class="t-c"></span><span class="t-c"></span><span class="t-c"></span><span class="t-e"></span><span class="t-f"></span>
</div>

</div>
</body>
</html>
```

FILE: styles.css
```css
* { box-sizing: border-box; }
html, body { margin: 0; padding: 0; }
body {
  width: 1366px; height: 736px; overflow: hidden;
  font: 12px/1.2 "Open Sans", "Noto Sans CJK SC", sans-serif;
  color: #222; background: #f0f0f0;
}
.app { display: flex; flex-direction: column; width: 1366px; height: 736px; position: relative; }
svg { display: block; flex: none; }
.i { width: 16px; height: 16px; flex: none; }
.c { display: inline-block; width: 0; height: 0; border: 3.5px solid transparent; border-top: 4px solid #666; border-bottom: 0; flex: none; vertical-align: middle; }

/* title */
.top { display: flex; height: 41px; background: #fff; flex: none; }
.logo { width: 46px; padding: 8px 0 0 9px; flex: none; position: relative; }
.lgmark { position: absolute; left: 37px; top: 35px; width: 0; height: 0; border-style: solid; border-width: 0 0 4px 4px; border-color: transparent transparent #999 transparent; }
.top-right { flex: 1; display: flex; flex-direction: column; min-width: 0; border-bottom: 1px solid #dcdcdc; }
.titlerow { display: flex; align-items: center; height: 21px; }
.qa { display: flex; align-items: center; padding-left: 4px; flex: none; width: 310px; }
.qs { width: 23px; display: flex; justify-content: center; flex: none; }
.qs.ql { margin-left: 3px; }
.qc { width: 8px; display: flex; justify-content: center; flex: none; }
.qm { width: 11px; text-align: center; color: #555; font-size: 10px; flex: none; }
.apptitle { font-size: 12px; white-space: nowrap; color: #222; flex: none; }
.winctl { margin-left: auto; display: flex; gap: 24px; padding-right: 13px; align-items: center; }
.tabrow { display: flex; height: 19px; align-items: stretch; }
.tabs { display: flex; padding-left: 4px; flex: none; }
.tab { padding: 0 13px; line-height: 19px; font-size: 12px; color: #333; white-space: nowrap; }
.tab.on { background: #5ba7f2; color: #fff; border-radius: 2px 2px 0 0; }
.user { margin-left: auto; display: flex; align-items: center; padding-right: 2px; }
.user .bell { margin-left: 8px; }
.user .ch { margin-left: 8px; }
.help { font-size: 16px; color: #aaa; font-weight: 600; line-height: 16px; margin-left: 6px; width: 10px; }
.user .lg { margin-left: 1px; border-top-color: #bbb; }
.user .sh { margin-left: 7px; }
.user .up { margin-left: 9px; }
.qsearch { width: 154px; height: 15px; border: 1px solid #aab; background: #fff; display: flex; align-items: center; justify-content: space-between; padding: 0 6px 0 3px; color: #999; margin-left: 5px; font-size: 12px; line-height: 13px; }

/* ribbon */
.ribbon { display: flex; height: 97px; flex: none; padding-top: 3px; background: linear-gradient(#fff 45%, #e6e9e9); border-bottom: 1px solid #999; }
.grp { display: flex; flex-direction: column; height: 91px; flex: none; border-right: 1px solid #d3d5d6; }
.g1 { width: 79px; }
.g1 .gb { padding-left: 8px; }
.g2 { width: 91px; }
.g2 .gb { padding-left: 9px; }
.g3 { width: 108px; }
.g3 .gb { padding-left: 8px; }
.g4 { width: 237px; }
.g4 .gb { padding-left: 9px; }
.g5 { width: 119px; }
.g5 .gb { padding-left: 12px; }
.g6 { width: 250px; }
.g6 .gb { padding-left: 6px; }
.g7 { width: 421px; }
.g7 .gb { padding-left: 6px; }
.gb { display: flex; height: 69px; flex: none; }
.gl { height: 22px; margin-top: 4px; display: flex; gap: 6px; align-items: center; justify-content: center; color: #333; white-space: nowrap; }
.gl-low { padding-top: 2px; }
.col { display: flex; flex-direction: column; flex: none; }
.ico { height: 23px; width: 16px; display: flex; align-items: center; }
.ml4 { margin-left: 4px; }
.ml5 { margin-left: 5px; }
.ml6 { margin-left: 6px; }
.ml14 { margin-left: 14px; }
.w102 { width: 102px; }
.w87 { width: 87px; }
.w103 { width: 103px; }
.w88 { width: 88px; }
.tool { height: 23px; display: flex; align-items: center; gap: 3px; white-space: nowrap; color: #222; }
.tool > span { padding-top: 3px; }
.tool.t20 { gap: 4px; }
.tool .chk { width: 14px; height: 14px; margin: 0 1px; }
.tool.dis { color: #aaa; }
.tool .cg { margin-left: 5px; }
.big { display: flex; flex-direction: column; align-items: center; padding-top: 2px; margin-top: 2px; flex: none; height: 67px; position: relative; }
.big > span { margin-top: 5px; font-size: 12px; }
.big.on { background: #c6d7ef; }
.big.dim > span { color: #bbb; }
.w26 { width: 26px; }
.w33 { width: 33px; }
.w40 { width: 40px; }
.w44 { width: 44px; }
.w50 { width: 50px; }
.bc { position: absolute; bottom: 5px; left: 21px; }
.g3grid { display: grid; grid-template-columns: 32px 31px 36px; grid-auto-rows: 23px; }
.ig { display: flex; align-items: center; gap: 2px; }
.g4grid { display: grid; grid-template-columns: repeat(4, 54px); grid-auto-rows: 23px; }

/* strip */
.strip { height: 30px; flex: none; background: #c8cacd; display: flex; gap: 6px; padding: 4px 0 0 3px; }
.dd { width: 99px; height: 22px; background: #fff; border: 1px solid #b4b6b8; display: flex; align-items: center; justify-content: space-between; padding: 0 3px 0 3px; }

/* main */
.main { display: flex; height: 529px; flex: none; background: #f0f0f0; }
.nav { width: 170px; flex: none; display: flex; flex-direction: column; background: #fff; border-right: 1px solid #c0c4c8; border-left: 1px solid #c0c4c8; position: relative; }
.navbar { height: 32px; flex: none; background: #eeeeee; border-bottom: 1px solid #c0c4c8; display: flex; align-items: center; gap: 4px; padding: 0 3px 3px 7px; }
.star { margin-right: auto; }
.nb { width: 25px; height: 25px; border: 1px solid #6db0f0; border-radius: 4px; background: #e8f2fd; display: flex; align-items: center; justify-content: center; }
.tree { flex: 1; position: relative; overflow: hidden; }
.tr { height: 24px; display: flex; align-items: center; gap: 6px; color: #111; white-space: nowrap; }
.tr.sub { margin-left: 20px; padding-left: 4px; width: 131px; }
.tr.fold { padding-left: 5px; gap: 4px; }
.tr.sel { background: #c6d7ef; }
.vthumb { position: absolute; background: #ccc; border-radius: 4px; }
.navthumb { left: 155px; top: 132px; width: 8px; height: 353px; }
.badge { position: absolute; left: -28px; top: 129px; width: 47px; height: 47px; border-radius: 50%; background: #f5821f; border: 2px solid #eee; box-shadow: 0 0 3px #666; color: #fff; font-weight: 700; font-size: 12px; line-height: 43px; text-align: right; padding-right: 3px; }

.midcol { width: 182px; margin-left: 4px; flex: none; display: flex; flex-direction: column; gap: 3px; }
.pane { border: 1px solid #c0c4c8; border-top: 0; background: #fff; display: flex; flex-direction: column; position: relative; overflow: hidden; }
.p1 { height: 264px; }
.p2 { height: 262px; }
.ph { height: 11px; flex: none; background: #d4d6da; text-align: right; padding-right: 4px; color: #888; font-size: 11px; line-height: 11px; overflow: visible; }
.ptabs { display: flex; height: 23px; background: #eeeeee; border-bottom: 1px solid #c0c4c8; border-top: 1px solid #c0c4c8; flex: none; }
.p2 .ptabs { height: 24px; }
.ptab { width: 65px; text-align: center; line-height: 21px; color: #888; background: #e2e2e2; border-right: 1px solid #c0c4c8; font-weight: 500; }
.ptab.on { background: #eeeeee; color: #222; }
.ptool { height: 30px; background: #eeeeee; display: flex; align-items: center; padding: 0 3px; gap: 4px; flex: none; }
.pt { color: #333; margin-left: 1px; font-size: 12px; }
.ptool .c { margin-left: 3px; }
.ptool .del { margin-left: 8px; }
.more { margin-left: auto; font-size: 8px; color: #555; }
.psearch { height: 20px; flex: none; display: flex; align-items: center; justify-content: space-between; padding: 0 4px 0 3px; color: #999; border-top: 1px solid #c0c4c8; border-bottom: 1px solid #c0c4c8; }
.clist { flex: 1; overflow: hidden; position: relative; padding: 0; }
.ci { height: 21px; line-height: 19px; padding-left: 64px; color: #111; }
.ci.sel { background: #c6d7ef; margin-left: 60px; padding-left: 4px; width: 58px; }
.listthumb { left: 167px; top: 114px; width: 7px; height: 25px; }

.props { flex: 1; position: relative; overflow: hidden; }
.prow { display: flex; height: 21px; width: 166px; line-height: 20px; }
.pn { width: 22px; background: #eeeeee; text-align: center; color: #333; border-bottom: 1px solid #d8d8d8; font-size: 12px; flex: none; }
.pg { width: 5px; background: #f2f2f2; flex: none; border-right: 1px solid #ddd; }
.pv { flex: 1; padding-left: 3px; border-bottom: 1px solid #c4c4c4; }
.prow.alt .pv { background: #ebebeb; color: #999; }
.phead { height: 20px; }
.phead .pn { background: #fff; border: 0; }
.phead .pg { background: #eee; border: 0; }
.phead .pv { background: #7db8f8; color: #fff; text-align: center; border: 0; padding: 0; }
.aup, .adn, .al, .ar { position: absolute; width: 0; height: 0; border: 4px solid transparent; }
.aup { left: 169px; top: 1px; border-bottom: 5px solid #222; border-top: 0; }
.adn { left: 169px; bottom: 17px; border-top: 5px solid #222; border-bottom: 0; }
.al { left: 2px; bottom: 3px; border-right: 5px solid #222; border-left: 0; }
.ar { left: 159px; bottom: 3px; border-left: 5px solid #222; border-right: 0; }
.propthumb { left: 169px; top: 141px; width: 8px; height: 65px; }
.hthumb { position: absolute; background: #ccc; border-radius: 4px; height: 8px; }
.propsh { left: 68px; bottom: 3px; width: 87px; }

.handle { width: 4px; flex: none; display: flex; }
.handle i { display: block; width: 4px; height: 100px; margin-top: 117px; background: #5f666c; }

.rightcol { flex: 1; display: flex; flex-direction: column; min-width: 0; }
.canvas { height: 332px; background: #000; position: relative; overflow: hidden; flex: none; }
.cad { position: absolute; left: 0; top: 0; }
.stick text { font-family: Roboto, "Liberation Sans", sans-serif; font-weight: 100; font-size: 35px; }
.pink { fill: #f58080; }
.teal { fill: #0fa0a0; }
.note text { font-family: "Open Sans", sans-serif; font-weight: 300; font-size: 23px; fill: #fff; }
.axis circle { fill: none; stroke: #0a8a0a; stroke-dasharray: 4 1; }
.axis text { font-family: "Liberation Sans", sans-serif; font-weight: 700; font-size: 15px; fill: #fff; text-anchor: middle; }
.vt3 { font: 8px "Liberation Sans", sans-serif; fill: #222; }

.float { position: absolute; left: 1px; top: 0; width: 144px; height: 181px; background: #1f4c7c; border: 1px solid #2b629b; border-top: 0; padding: 0 7px 0 5px; }
.fh { height: 12px; margin: 0 -7px 8px -5px; background: #17375d; text-align: right; padding-right: 3px; color: #9fb5cd; font-size: 11px; line-height: 12px; font-weight: 700; }
.fb { height: 25px; background: #21527f; border: 1px solid #16385c; border-radius: 3px; margin-bottom: 7px; color: #dfe8f2; display: flex; align-items: center; justify-content: center; position: relative; padding-top: 1px; }
.fb8 { padding-right: 8px; }
.wc { position: absolute; right: 4px; top: 9px; width: 0; height: 0; border: 4px solid transparent; border-top: 5px solid #fff; border-bottom: 0; }

.viewtools { position: absolute; right: 0; top: 0; width: 32px; height: 237px; background: rgba(151,151,151,.53); border-radius: 0 0 0 4px; }

.dialog { position: absolute; left: 135px; top: 116px; width: 361px; height: 144px; background: #efefef; border: 1px solid #c0c6d0; border-top: 0; display: flex; flex-direction: column; }
.dh { height: 27px; background: #2f7fdf; color: #fff; display: flex; align-items: center; justify-content: space-between; padding: 2px 9px 0 8px; margin: 0 -1px; flex: none; }
.db { height: 74px; margin: 0 9px; border-bottom: 1px solid #c4c6cc; padding: 22px 0 0 15px; display: flex; gap: 10px; color: #555; flex: none; }
.db span { line-height: 18px; margin-top: 0; font-size: 14px; white-space: nowrap; }
.df { display: flex; justify-content: flex-end; padding: 6px 11px 0 0; }
.ok { width: 78px; height: 26px; border: 0; background: #2f7fdf; color: #fff; border-radius: 3px; font: inherit; padding: 0; }

.hbar { height: 4px; flex: none; background: #fff; }
.hbar i { display: block; width: 100px; height: 4px; margin-left: 454px; background: #606a72; }

.tablep { flex: 1; display: flex; flex-direction: column; background: #fff; border: 1px solid #c0c4c8; border-top: 0; border-right: 0; min-height: 0; }
.tablep .ph { padding-right: 5px; }
.tt { height: 22px; flex: none; background: #eeeeee; border-top: 1px solid #c0c4c8; border-bottom: 1px solid #c0c4c8; line-height: 20px; padding: 2px 0 0 8px; color: #666; font-weight: 500; }
.ttool { height: 31px; flex: none; background: #eeeeee; border-bottom: 1px solid #c0c4c8; display: flex; align-items: center; gap: 14px; padding: 2px 0 0 4px; color: #333; }
.ttool .dis { color: #aaa; }
.tw { flex: 1; display: flex; position: relative; overflow: hidden; }
.gut { width: 7px; flex: none; background: #e8e8e8; display: flex; flex-direction: column; height: 114px; font-size: 11px; line-height: 21px; text-align: center; color: #333; }
.gut span:first-child { height: 34px; background: #fff; }
.gut .r1 { height: 21px; background: #eee; overflow: hidden; }
.gut .r2 { height: 21px; background: #6aaef5; color: #fff; font-weight: 700; overflow: hidden; }
.bt { border-collapse: collapse; table-layout: fixed; width: 998px; flex: none; height: 76px; }
.c60 { width: 60px; } .c61 { width: 61px; } .c41 { width: 41px; } .c160 { width: 160px; } .c81 { width: 81px; } .c101 { width: 101px; }
.bt th { font-weight: 400; color: #555; background: #eee; border: 1px solid #d4d6d8; height: 17px; padding: 3px 0 0; border-top: 0; }
.bt th.act { background: #7db8f8; color: #fff; font-weight: 500; }
.bt th.blank { height: 17px; padding: 0; }
.bt th.low { height: 17px; line-height: 14px; padding-top: 2px; }
.bt td { border: 1px solid #c8c8c8; padding: 0 3px; height: 21px; white-space: nowrap; color: #111; overflow: hidden; position: relative; }
.bt td.pos { padding: 0 0 0 3px; line-height: 18px; letter-spacing: .4px; }
.bt td.ls { letter-spacing: .3px; }
.bt td.edit { padding: 0; overflow: visible; }
.ed { border: 2px solid #6db0f0; height: 21px; display: flex; align-items: center; justify-content: space-between; padding-left: 2px; overflow: hidden; position: relative; letter-spacing: .2px; }
.ed span { white-space: nowrap; }
.ed b { position: absolute; right: 1px; top: 1px; height: 15px; width: 16px; background: #dcecff; border: 1px solid #6db0f0; border-radius: 2px; color: #3d7fc9; font-size: 10px; line-height: 10px; text-align: center; font-weight: 700; }
.handlept { position: absolute; right: -3px; bottom: -3px; width: 5px; height: 5px; background: #6aaef5; }
.rb { font-size: 10px; vertical-align: 2px; margin: 0 1px; }
.tl { left: 2px; bottom: 4px; }
.tr2 { left: auto; right: 2px; bottom: 4px; }
.tbth { left: 587px; bottom: 4px; width: 272px; }

/* status */
.status { height: 32px; flex: none; background: #dddee0; display: flex; align-items: center; white-space: nowrap; color: #444; position: relative; }
.status > span { flex: none; padding-top: 2px; }
.status > .sb { padding-top: 0; }
.s1 { width: 209px; padding-left: 3px; letter-spacing: .5px; }
.s2 { width: 79px; }
.s3 { width: 134px; }
.s4 { width: 102px; }
.s5 { width: 80px; }
.sb { height: 24px; border: 1px solid #888; background: #dcdcdc; margin-right: 4px; display: flex; align-items: center; justify-content: center; gap: 5px; color: #333; }
.sb.on { border-color: #3d8fe0; background: #fff; }
.sb.off { opacity: .75; }
.sb.txt { background: #dcdcdc; }
.sb.act { background: #c8c8c8; }
.w24 { width: 24px; }
.w36 { width: 36px; margin-right: 3px; }
.w72 { width: 72px; }
.w58 { width: 58px; margin-right: 6px; }
.s6 { color: #333; }
.s7 { margin-left: auto; padding-right: 12px; }

.taskbar { height: 7px; flex: none; display: flex; gap: 1px; background: #fff; padding-top: 1px; }
.taskbar span { display: block; height: 6px; }
.t-a { width: 193px; background: linear-gradient(90deg, #6a5040, #9b7c60); }
.t-b { width: 124px; background: linear-gradient(90deg, #e0d6c8, #cbbcaa); }
.t-c { width: 124px; background: linear-gradient(90deg, #cdbcab, #7a6250); }
.t-e { flex: 1; background: linear-gradient(90deg, #4c3a2c, #7a5f48); }
.t-f { width: 14px; background: #999; }
```
